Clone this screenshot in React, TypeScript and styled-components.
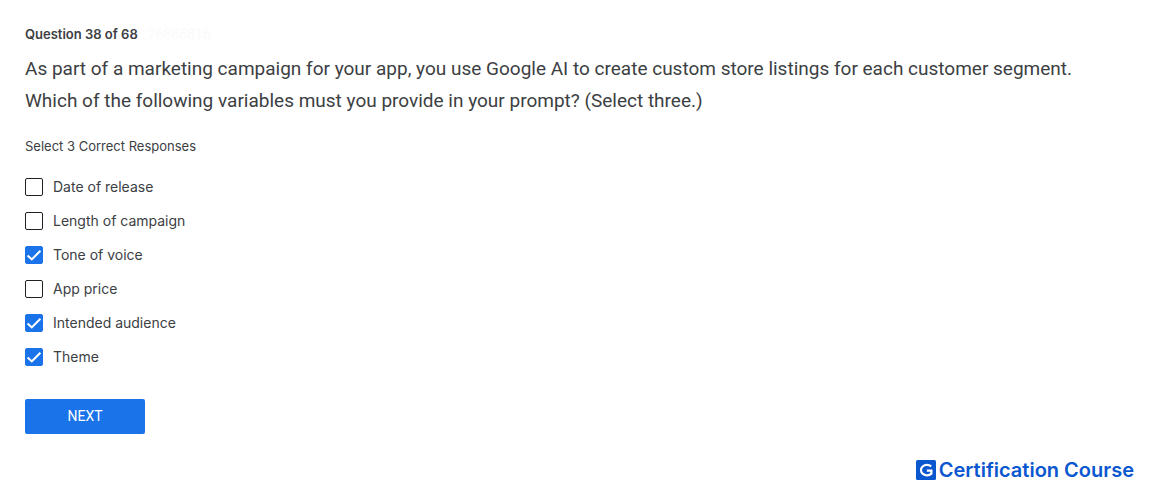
import React, { useState } from "react";
import styled, { createGlobalStyle } from "styled-components";

const GlobalStyle = createGlobalStyle`
  * { box-sizing: border-box; }
  body {
    margin: 0;
    background: #fff;
    color: #3c4043;
    font-family: Roboto, "Liberation Sans", sans-serif;
  }
`;

const Page = styled.main`
  display: flex;
  flex-direction: column;
  align-items: stretch;
  padding: 24px 16px 8px 25px;
`;

const Meta = styled.div`
  display: flex;
  gap: 10px;
  font-size: 14px;
  line-height: 20px;
`;

const Counter = styled.span`
  font-family: Inter, sans-serif;
  font-size: 13px;
  font-weight: 600;
  color: #3c4043;
`;

const QuestionId = styled.span`
  color: #fafafa;
`;

const Prompt = styled.h1`
  margin: 9px 0 0;
  max-width: 1080px;
  font-size: 19px;
  font-weight: 400;
  line-height: 32px;
`;

const Choices = styled.fieldset`
  margin: 19px 0 0;
  padding: 0;
  border: 0;
  min-width: 0;
`;

const Legend = styled.legend`
  padding: 0;
  margin-bottom: 14px;
  font-family: Inter, sans-serif;
  font-size: 13px;
  line-height: 20px;
`;

const Option = styled.label`
  display: flex;
  align-items: center;
  gap: 10px;
  width: fit-content;
  height: 34px;
  font-family: Inter, sans-serif;
  font-size: 14px;
  line-height: 20px;
  cursor: pointer;
`;

const Box = styled.span`
  display: grid;
  width: 18px;
  height: 18px;

  > * {
    grid-area: 1 / 1;
  }
`;

const Checkbox = styled.input`
  appearance: none;
  width: 18px;
  height: 18px;
  margin: 0;
  border: 1px solid #202124;
  border-radius: 2px;
  background: #fff;
  cursor: pointer;

  &:checked {
    border-color: #1a73e8;
    background: #1a73e8;
  }
`;

const Tick = styled.svg`
  width: 18px;
  height: 18px;
  pointer-events: none;
`;

const NextButton = styled.button`
  align-self: flex-start;
  width: 120px;
  height: 35px;
  margin-top: 25px;
  padding: 0 0 1px;
  border: 0;
  border-radius: 2px;
  background: #1a73e8;
  color: #fff;
  font-family: Roboto, sans-serif;
  font-size: 14px;
  font-weight: 400;
  line-height: 20px;
  cursor: pointer;
`;

const Brand = styled.footer`
  display: flex;
  align-items: center;
  align-self: flex-end;
  gap: 3px;
  margin-top: 24px;
  color: #0b57d0;
  font-family: Inter, sans-serif;
  font-size: 20px;
  font-weight: 600;
  line-height: 24px;
`;

const BrandMark = styled.svg`
  width: 20px;
  height: 20px;
`;

const options = [
  { label: "Date of release", picked: false },
  { label: "Length of campaign", picked: false },
  { label: "Tone of voice", picked: true },
  { label: "App price", picked: false },
  { label: "Intended audience", picked: true },
  { label: "Theme", picked: true },
];

export default function App() {
  const [picked, setPicked] = useState<boolean[]>(options.map((o) => o.picked));
  const toggle = (index: number) =>
    setPicked((prev) => prev.map((value, i) => (i === index ? !value : value)));

  return (
    <>
      <GlobalStyle />
      <Page>
        <Meta>
          <Counter>Question 38 of 68</Counter>
          <QuestionId>26886816</QuestionId>
        </Meta>
        <Prompt>
          As part of a marketing campaign for your app, you use Google AI to create custom store
          listings for each customer segment. Which of the following variables must you provide in
          your prompt? (Select three.)
        </Prompt>
        <Choices>
          <Legend>Select 3 Correct Responses</Legend>
          {options.map((option, index) => (
            <Option key={option.label}>
              <Box>
                <Checkbox
                  type="checkbox"
                  checked={picked[index]}
                  onChange={() => toggle(index)}
                />
                {picked[index] && (
                  <Tick viewBox="0 0 18 18" aria-hidden="true">
                    <path d="M2.6 9.4 6.8 13.4 15.4 4.8" fill="none" stroke="#fff" strokeWidth="2.1" />
                  </Tick>
                )}
              </Box>
              {option.label}
            </Option>
          ))}
        </Choices>
        <NextButton type="button">NEXT</NextButton>
        <Brand>
          <BrandMark viewBox="0 0 20 20" aria-hidden="true">
            <rect width="20" height="20" rx="1.5" fill="#0b57d0" />
            <path
              d="M15.2 6.4A6 5.2 0 1 0 15.4 13.6V10.6H10.8"
              fill="none"
              stroke="#fff"
              strokeWidth="2.2"
            />
          </BrandMark>
          Certification Course
        </Brand>
      </Page>
    </>
  );
}
